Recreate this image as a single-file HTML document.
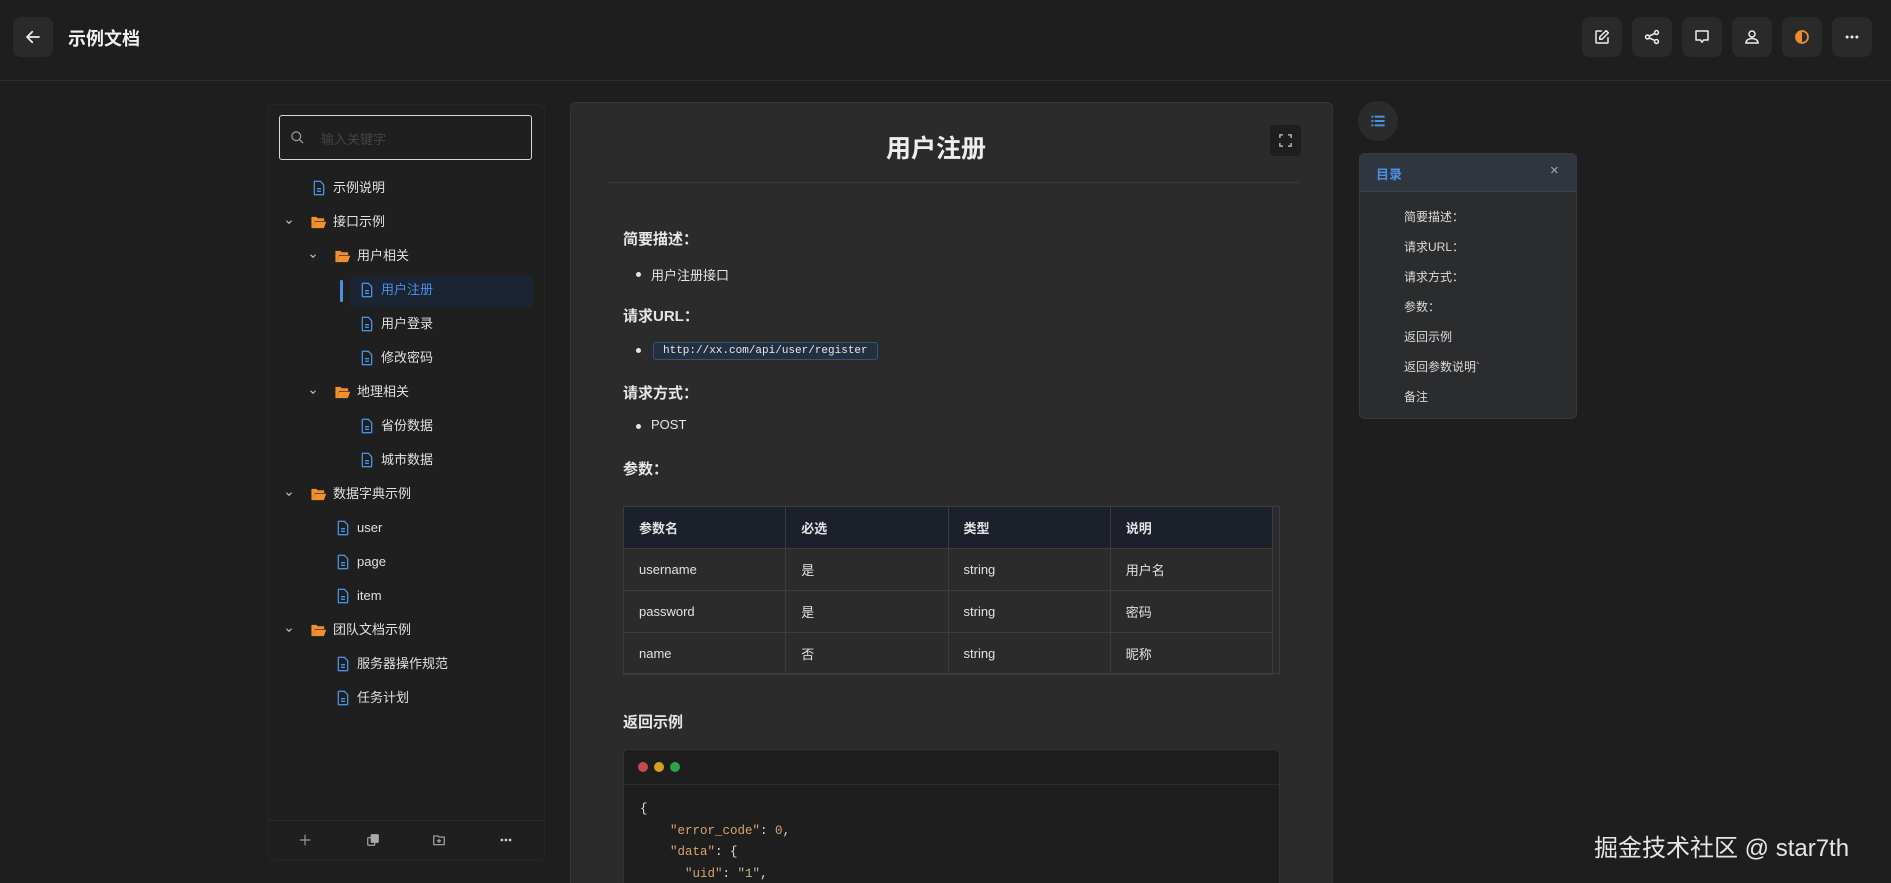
<!DOCTYPE html>
<html style="overflow:hidden;height:883px"><head><meta charset="utf-8">
<style>
*{box-sizing:border-box;margin:0;padding:0}
body{width:1891px;height:883px;overflow:hidden;background:#1e1e1f;font-family:"Liberation Sans","Noto Sans CJK SC",sans-serif;color:#e2e2e2;position:relative}
.abs{position:absolute}
.hdr{left:0;top:0;width:1891px;height:81px;border-bottom:1px solid #2c2c2c}
.btn{width:40px;height:40px;border-radius:8px;background:#2a2a2a;display:flex;align-items:center;justify-content:center}
.side{left:267px;top:104px;width:278px;height:757px;background:#1f1f1f;border:1px solid #262626;border-radius:6px}
.search{left:279px;top:115px;width:253px;height:45px;border:1px solid #d8d8d8;border-radius:3px}
.ti{position:absolute;font-size:13px;height:20px;line-height:20px;color:#e0e0e0;display:flex;align-items:center}
.card{left:570px;top:102px;width:763px;height:781px;background:#2b2b2b;border:1px solid #363636;border-bottom:none;border-radius:6px 6px 0 0}
h3{position:absolute;font-size:15px;font-weight:bold;color:#e6e6e6}
.li{position:absolute;font-size:13px;color:#e6e6e6}
.li:before{content:"";position:absolute;left:-15px;top:7px;width:5px;height:5px;border-radius:50%;background:#e6e6e6}
table{border-collapse:collapse;position:absolute;left:623px;top:506px;width:650px;font-size:13px}
td,th{border:1px solid #3c3c3c;height:42px;padding-left:15px;text-align:left;width:162px}
th{background:#1b202b;font-weight:bold}
.toc{left:1359px;top:153px;width:218px;height:266px;background:#2b2c2e;border:1px solid #3a3a3a;border-radius:6px;overflow:hidden}
.toc div.it{position:absolute;left:44px;font-size:12px;color:#dcdcdc}
.mono{font-family:"Liberation Mono",monospace}
</style></head><body>
<div class="abs hdr"></div>
<div class="abs btn" style="left:13px;top:17px;background:#2a2a2a">
<svg width="18" height="18" viewBox="0 0 24 24" fill="none" stroke="#eee" stroke-width="2.4" stroke-linecap="round" stroke-linejoin="round"><path d="M20 12H5M11 5l-7 7 7 7"/></svg></div>
<div class="abs" style="left:68px;top:25px;font-size:18px;font-weight:bold;color:#f0f0f0">示例文档</div>

<div class="abs btn" style="left:1582px;top:17px"><svg width="18" height="18" viewBox="0 0 24 24" fill="none" stroke="#eee" stroke-width="2" stroke-linecap="round" stroke-linejoin="round"><path d="M11 4H5a1 1 0 0 0-1 1v14a1 1 0 0 0 1 1h14a1 1 0 0 0 1-1v-6"/><path d="M17.5 3.5l3 3L12 15H9v-3z"/></svg></div>
<div class="abs btn" style="left:1632px;top:17px"><svg width="18" height="18" viewBox="0 0 24 24" fill="none" stroke="#eee" stroke-width="2"><circle cx="6" cy="12" r="2.6"/><circle cx="18" cy="6" r="2.6"/><circle cx="18" cy="18" r="2.6"/><path d="M8.3 10.8l7.4-3.6M8.3 13.2l7.4 3.6"/></svg></div>
<div class="abs btn" style="left:1682px;top:17px"><svg width="18" height="18" viewBox="0 0 24 24" fill="none" stroke="#eee" stroke-width="2" stroke-linejoin="round"><path d="M4 4h16v12h-6l-2 3-2-3H4z"/></svg></div>
<div class="abs btn" style="left:1732px;top:17px"><svg width="18" height="18" viewBox="0 0 24 24" fill="none" stroke="#eee" stroke-width="2"><circle cx="12" cy="8" r="4"/><path d="M4 20c0-4 4-6 8-6s8 2 8 6z"/></svg></div>
<div class="abs btn" style="left:1782px;top:17px"><svg width="18" height="18" viewBox="0 0 24 24"><circle cx="12" cy="12" r="8" fill="none" stroke="#f08a2c" stroke-width="2.4"/><path d="M12 4a8 8 0 0 0 0 16z" fill="#f08a2c"/></svg></div>
<div class="abs btn" style="left:1832px;top:17px"><svg width="18" height="18" viewBox="0 0 24 24" fill="#eee"><circle cx="5.5" cy="12" r="2"/><circle cx="12" cy="12" r="2"/><circle cx="18.5" cy="12" r="2"/></svg></div>

<div class="abs side"></div>
<div class="abs search"></div>
<svg class="abs" style="left:290px;top:130px" width="15" height="15" viewBox="0 0 24 24" fill="none" stroke="#999" stroke-width="2"><circle cx="10" cy="10" r="7"/><path d="M15 15l6 6"/></svg>
<div class="abs" style="left:321px;top:129px;font-size:13px;color:#444">输入关键字</div>

<svg width="0" height="0" style="position:absolute"><defs>
<symbol id="f" viewBox="0 0 24 24"><path d="M6 2h8l5 5v14a1 1 0 0 1-1 1H6a1 1 0 0 1-1-1V3a1 1 0 0 1 1-1z" fill="none" stroke="#4a90e2" stroke-width="2"/><path d="M9 13h6M9 17h6" stroke="#4a90e2" stroke-width="2"/></symbol>
<symbol id="d" viewBox="0 0 24 24"><path d="M2 5a1 1 0 0 1 1-1h6l2 2h8a1 1 0 0 1 1 1v3H7l-3 10H3a1 1 0 0 1-1-1z" fill="#f0902e"/><path d="M7 11h16l-3.5 9H4z" fill="#f0902e"/></symbol>
<symbol id="c" viewBox="0 0 24 24"><path d="M6 9l6 6 6-6" fill="none" stroke="#ccc" stroke-width="2.6"/></symbol>
</defs></svg>

<div class="abs" style="left:340px;top:280px;width:3px;height:22px;background:#4a90e2;border-radius:1px"></div>
<div class="abs" style="left:349px;top:276px;width:184px;height:31px;background:#1a2433;border-radius:4px"></div>

<div class="ti" style="left:311px;top:178px"><svg width="16" height="16"><use href="#f"/></svg><span style="margin-left:6px">示例说明</span></div>
<div class="ti" style="left:284px;top:212px"><svg width="10" height="10"><use href="#c"/></svg><svg width="17" height="17" style="margin-left:16px"><use href="#d"/></svg><span style="margin-left:6px">接口示例</span></div>
<div class="ti" style="left:308px;top:246px"><svg width="10" height="10"><use href="#c"/></svg><svg width="17" height="17" style="margin-left:16px"><use href="#d"/></svg><span style="margin-left:6px">用户相关</span></div>
<div class="ti" style="left:359px;top:280px;color:#4a90e2"><svg width="16" height="16"><use href="#f"/></svg><span style="margin-left:6px">用户注册</span></div>
<div class="ti" style="left:359px;top:314px"><svg width="16" height="16"><use href="#f"/></svg><span style="margin-left:6px">用户登录</span></div>
<div class="ti" style="left:359px;top:348px"><svg width="16" height="16"><use href="#f"/></svg><span style="margin-left:6px">修改密码</span></div>
<div class="ti" style="left:308px;top:382px"><svg width="10" height="10"><use href="#c"/></svg><svg width="17" height="17" style="margin-left:16px"><use href="#d"/></svg><span style="margin-left:6px">地理相关</span></div>
<div class="ti" style="left:359px;top:416px"><svg width="16" height="16"><use href="#f"/></svg><span style="margin-left:6px">省份数据</span></div>
<div class="ti" style="left:359px;top:450px"><svg width="16" height="16"><use href="#f"/></svg><span style="margin-left:6px">城市数据</span></div>
<div class="ti" style="left:284px;top:484px"><svg width="10" height="10"><use href="#c"/></svg><svg width="17" height="17" style="margin-left:16px"><use href="#d"/></svg><span style="margin-left:6px">数据字典示例</span></div>
<div class="ti" style="left:335px;top:518px"><svg width="16" height="16"><use href="#f"/></svg><span style="margin-left:6px">user</span></div>
<div class="ti" style="left:335px;top:552px"><svg width="16" height="16"><use href="#f"/></svg><span style="margin-left:6px">page</span></div>
<div class="ti" style="left:335px;top:586px"><svg width="16" height="16"><use href="#f"/></svg><span style="margin-left:6px">item</span></div>
<div class="ti" style="left:284px;top:620px"><svg width="10" height="10"><use href="#c"/></svg><svg width="17" height="17" style="margin-left:16px"><use href="#d"/></svg><span style="margin-left:6px">团队文档示例</span></div>
<div class="ti" style="left:335px;top:654px"><svg width="16" height="16"><use href="#f"/></svg><span style="margin-left:6px">服务器操作规范</span></div>
<div class="ti" style="left:335px;top:688px"><svg width="16" height="16"><use href="#f"/></svg><span style="margin-left:6px">任务计划</span></div>

<div class="abs" style="left:268px;top:820px;width:276px;height:1px;background:#2c2c2c"></div>
<svg class="abs" style="left:298px;top:833px" width="14" height="14" viewBox="0 0 24 24" stroke="#999" stroke-width="2"><path d="M12 3v18M3 12h18"/></svg>
<svg class="abs" style="left:366px;top:833px" width="14" height="14" viewBox="0 0 24 24" fill="none" stroke="#aaa" stroke-width="2"><rect x="3" y="8" width="12" height="13" rx="1"/><rect x="9" y="3" width="12" height="13" rx="1" fill="#aaa"/></svg>
<svg class="abs" style="left:432px;top:833px" width="14" height="14" viewBox="0 0 24 24" fill="none" stroke="#aaa" stroke-width="2"><path d="M3 5h7l2 2h9v13H3z"/><path d="M12 10v7M8.5 13.5h7"/></svg>
<svg class="abs" style="left:499px;top:833px" width="14" height="14" viewBox="0 0 24 24" fill="#ccc"><circle cx="5" cy="12" r="2.3"/><circle cx="12" cy="12" r="2.3"/><circle cx="19" cy="12" r="2.3"/></svg>

<div class="abs card"></div>
<div class="abs" style="left:836px;top:129px;width:200px;text-align:center;font-size:25px;font-weight:bold;color:#eee">用户注册</div>
<div class="abs btn" style="left:1270px;top:125px;width:31px;height:31px;border-radius:4px;background:#1e1e1e"><svg width="15" height="15" viewBox="0 0 24 24" fill="none" stroke="#ccc" stroke-width="2"><path d="M3 8V3h5M16 3h5v5M21 16v5h-5M8 21H3v-5"/></svg></div>
<div class="abs" style="left:607px;top:182px;width:693px;height:1px;background:#3a3a3a"></div>

<h3 style="left:623px;top:228px">简要描述：</h3>
<div class="li" style="left:651px;top:265px">用户注册接口</div>
<h3 style="left:623px;top:305px">请求URL：</h3>
<div class="li" style="left:651px;top:341px"><span class="mono" style="display:inline-block;border:1px solid #3c5270;background:#223042;border-radius:3px;font-size:11px;padding:2px 9px;margin-left:2px;color:#e8e8e8">http://xx.com/api/user/register</span></div>
<h3 style="left:623px;top:382px">请求方式：</h3>
<div class="li" style="left:651px;top:417px">POST</div>
<h3 style="left:623px;top:458px">参数：</h3>

<div class="abs" style="left:623px;top:506px;width:657px;height:168px;border:1px solid #3c3c3c"></div>
<table><tr><th>参数名</th><th>必选</th><th>类型</th><th>说明</th></tr>
<tr><td>username</td><td>是</td><td>string</td><td>用户名</td></tr>
<tr><td>password</td><td>是</td><td>string</td><td>密码</td></tr>
<tr><td>name</td><td>否</td><td>string</td><td>昵称</td></tr></table>

<h3 style="left:623px;top:711px">返回示例</h3>
<div class="abs" style="left:623px;top:749px;width:657px;height:134px;background:#1e1e1e;border:1px solid #333;border-bottom:none;border-radius:5px 5px 0 0"></div>
<div class="abs" style="left:624px;top:784px;width:655px;height:1px;background:#2c2c2c"></div>
<div class="abs" style="left:638px;top:762px;width:10px;height:10px;border-radius:50%;background:#c94a4a"></div>
<div class="abs" style="left:654px;top:762px;width:10px;height:10px;border-radius:50%;background:#d4a020"></div>
<div class="abs" style="left:670px;top:762px;width:10px;height:10px;border-radius:50%;background:#2ca34a"></div>
<div class="abs mono" style="left:640px;top:799px;font-size:12.5px;line-height:21.5px;color:#ddd;white-space:pre">{
    <span style="color:#d7a56b">"error_code"</span>: <span style="color:#d7a56b">0</span>,
    <span style="color:#d7a56b">"data"</span>: {
      <span style="color:#d7a56b">"uid"</span>: <span style="color:#a9c48a">"1"</span>,</div>

<div class="abs" style="left:1358px;top:101px;width:40px;height:40px;border-radius:50%;background:#2b2b2b;display:flex;align-items:center;justify-content:center"><svg width="16" height="16" viewBox="0 0 24 24" fill="#4a90e2"><rect x="2" y="4" width="3" height="3"/><rect x="2" y="10.5" width="3" height="3"/><rect x="2" y="17" width="3" height="3"/><rect x="7" y="4" width="15" height="3"/><rect x="7" y="10.5" width="15" height="3"/><rect x="7" y="17" width="15" height="3"/></svg></div>
<div class="abs toc">
<div style="position:absolute;left:0;top:0;width:218px;height:38px;background:#30363f;border-bottom:1px solid #3d434c"></div>
<div style="position:absolute;left:16px;top:10px;font-size:13px;font-weight:bold;color:#4a90e2">目录</div>
<div style="position:absolute;left:190px;top:8px;font-size:15px;color:#aaa">×</div>
<div class="it" style="top:54px">简要描述：</div>
<div class="it" style="top:84px">请求URL：</div>
<div class="it" style="top:114px">请求方式：</div>
<div class="it" style="top:144px">参数：</div>
<div class="it" style="top:174px">返回示例</div>
<div class="it" style="top:204px">返回参数说明`</div>
<div class="it" style="top:234px">备注</div>
</div>

<div class="abs" style="left:1594px;top:828px;font-size:24px;color:#e6e6e6;white-space:nowrap">掘金技术社区 @ star7th</div>
</body></html>
